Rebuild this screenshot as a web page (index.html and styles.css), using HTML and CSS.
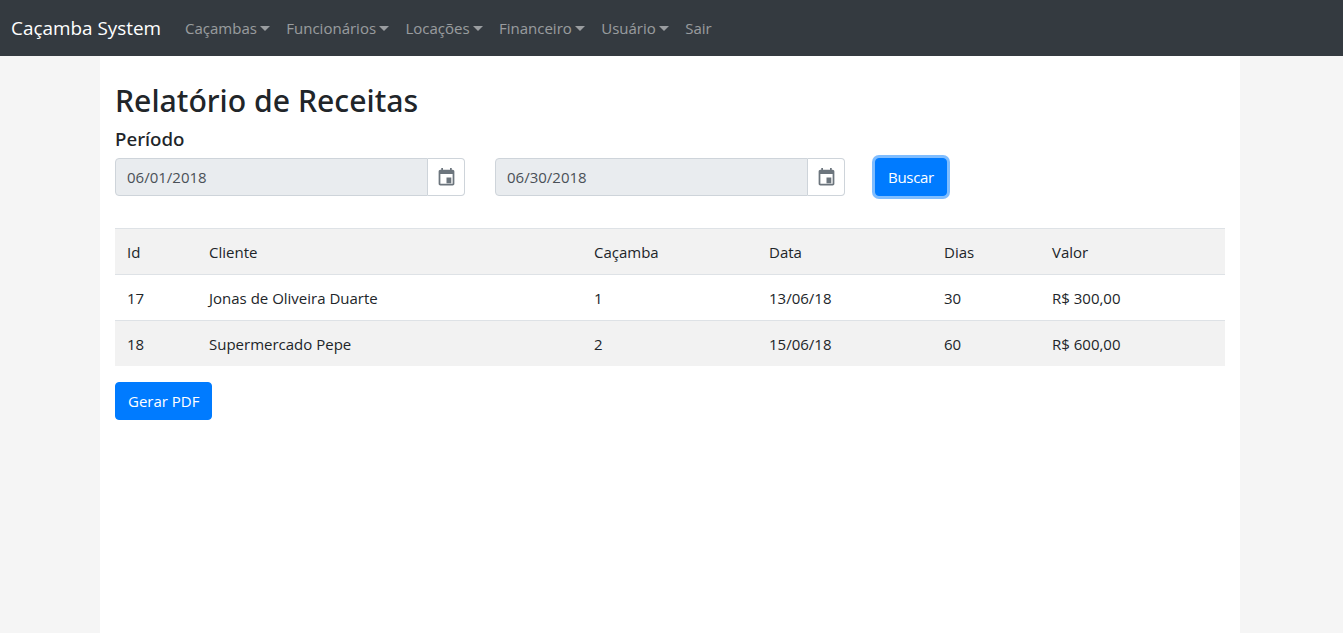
FILE: index.html
```html
<!DOCTYPE html>
<html>
<head>
<title>Relatório de Receitas</title>
<link rel="stylesheet" href="styles.css">
</head>
<body>
<nav class="navbar">
  <a class="brand" href="#">Caçamba System</a>
  <ul class="nav-list">
    <li><a class="nav-link caret" href="#">Caçambas</a></li>
    <li><a class="nav-link caret" href="#">Funcionários</a></li>
    <li><a class="nav-link caret" href="#">Locações</a></li>
    <li><a class="nav-link caret" href="#">Financeiro</a></li>
    <li><a class="nav-link caret" href="#">Usuário</a></li>
    <li><a class="nav-link" href="#">Sair</a></li>
  </ul>
</nav>

<main class="container">
  <h1 class="title">Relatório de Receitas</h1>
  <h2 class="subtitle">Período</h2>
  <form class="filter-row">
    <div class="date-group">
      <input class="date-input" type="text" value="06/01/2018" readonly>
      <span class="date-addon">
        <svg class="cal-icon" viewBox="0 0 24 24"><path d="M19 3h-1V1h-2v2H8V1H6v2H5c-1.1 0-2 .9-2 2v14c0 1.1.9 2 2 2h14c1.1 0 2-.9 2-2V5c0-1.1-.9-2-2-2zm0 16H5V8h14v11zM12 12h5.500v6.500H12z"/></svg>
      </span>
    </div>
    <div class="date-group">
      <input class="date-input" type="text" value="06/30/2018" readonly>
      <span class="date-addon">
        <svg class="cal-icon" viewBox="0 0 24 24"><path d="M19 3h-1V1h-2v2H8V1H6v2H5c-1.1 0-2 .9-2 2v14c0 1.1.9 2 2 2h14c1.1 0 2-.9 2-2V5c0-1.1-.9-2-2-2zm0 16H5V8h14v11zM12 12h5.500v6.500H12z"/></svg>
      </span>
    </div>
    <button class="btn btn-focus" type="button">Buscar</button>
  </form>

  <table class="report-table">
    <colgroup>
      <col class="col-id">
      <col class="col-client">
      <col class="col-mid">
      <col class="col-mid">
      <col class="col-days">
      <col class="col-value">
    </colgroup>
    <thead>
      <tr>
        <th>Id</th>
        <th>Cliente</th>
        <th>Caçamba</th>
        <th>Data</th>
        <th>Dias</th>
        <th>Valor</th>
      </tr>
    </thead>
    <tbody>
      <tr>
        <td>17</td>
        <td>Jonas de Oliveira Duarte</td>
        <td>1</td>
        <td>13/06/18</td>
        <td>30</td>
        <td>R$ 300,00</td>
      </tr>
      <tr class="striped">
        <td>18</td>
        <td>Supermercado Pepe</td>
        <td>2</td>
        <td>15/06/18</td>
        <td>60</td>
        <td>R$ 600,00</td>
      </tr>
    </tbody>
  </table>

  <button class="btn" type="button">Gerar PDF</button>
</main>
</body>
</html>
```

FILE: styles.css
```css
* {
  box-sizing: border-box;
}

html,
body {
  height: 100%;
}

body {
  margin: 0;
  display: flex;
  flex-direction: column;
  background-color: #f5f5f5;
  color: #212529;
  font-family: "Open Sans", "Noto Sans", sans-serif;
  font-size: 15px;
  line-height: 24px;
  overflow: hidden;
}

.navbar {
  display: flex;
  align-items: center;
  height: 56px;
  padding: 0 11px;
  background-color: #343a40;
}

.brand {
  margin-right: 16px;
  color: #fff;
  font-size: 18.9px;
  text-decoration: none;
  white-space: nowrap;
}

.nav-list {
  display: flex;
  margin: 0;
  padding: 0;
  list-style: none;
}

.nav-link {
  display: block;
  padding: 0 8px;
  color: rgba(255, 255, 255, 0.5);
  text-decoration: none;
  white-space: nowrap;
}

.caret::after {
  content: "";
  display: inline-block;
  margin-left: 3.4px;
  vertical-align: 3px;
  border-top: 5px solid;
  border-right: 5px solid transparent;
  border-left: 5px solid transparent;
}

.container {
  flex: 1;
  width: 1140px;
  margin: 0 103px 0 100px;
  padding: 25px 15px 0;
  background-color: #fff;
}

.title {
  margin: 0;
  font-family: "Noto Sans", sans-serif;
  font-size: 30.2px;
  font-weight: 500;
  line-height: 40px;
}

.subtitle {
  margin: 6px 0 7px;
  font-family: "Noto Sans", sans-serif;
  font-size: 18.7px;
  font-weight: 500;
  line-height: 24px;
}

.filter-row {
  display: flex;
  align-items: center;
  gap: 30px;
  margin-bottom: 32px;
}

.date-group {
  display: flex;
  width: 350px;
  height: 38px;
}

.date-input {
  flex: 1;
  min-width: 0;
  padding: 0 11px;
  border: 1px solid #ced4da;
  border-radius: 4px 0 0 4px;
  background-color: #e9ecef;
  color: #495057;
  font: inherit;
}

.date-addon {
  display: flex;
  align-items: center;
  justify-content: center;
  width: 37px;
  border: 1px solid #ced4da;
  border-left: 0;
  border-radius: 0 4px 4px 0;
  background-color: #fff;
}

.cal-icon {
  width: 21px;
  height: 21px;
  fill: #6c757d;
}

.btn {
  height: 38px;
  padding: 0 12px;
  border: 1px solid #007bff;
  border-radius: 4px;
  background-color: #007bff;
  color: #fff;
  font: inherit;
}

.btn-focus {
  width: 72px;
  padding: 0;
  letter-spacing: -0.3px;
  box-shadow: 0 0 0 3px rgba(0, 123, 255, 0.5);
}

.report-table {
  width: 1110px;
  margin-bottom: 16px;
  border-collapse: collapse;
  table-layout: fixed;
}

.col-id {
  width: 82px;
}

.col-client {
  width: 385px;
}

.col-mid {
  width: 175px;
}

.col-days {
  width: 108px;
}

.col-value {
  width: 185px;
}

.report-table th,
.report-table td {
  height: 46px;
  padding: 0 12px;
  border-top: 1px solid #dee2e6;
  font-weight: 400;
  text-align: left;
}

.report-table thead th {
  border-bottom: 1px solid #dee2e6;
  background-color: #f2f2f2;
}

.report-table .striped td {
  height: 45px;
  padding-top: 1px;
  background-color: #f2f2f2;
}
```
